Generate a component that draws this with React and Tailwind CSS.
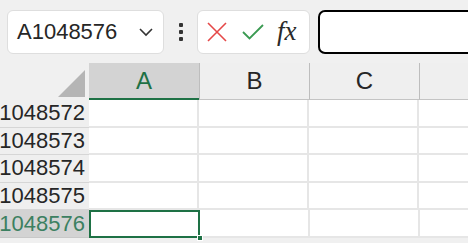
import React from 'react';

const rows = ['1048572', '1048573', '1048574', '1048575', '1048576'];
const cols = ['A', 'B', 'C'];

function Triangle() {
  return (
    <svg width="28" height="28" viewBox="0 0 28 28" className="block">
      <polygon points="0,27 27,27 27,0" fill="#b5b5b5" />
    </svg>
  );
}

export default function App() {
  return (
    <div className="w-[468px] h-[243px] bg-[#f0f0f0] overflow-hidden text-[#262626]" style={{ fontFamily: '"Liberation Sans", Arial, sans-serif' }}>
      {/* Formula bar */}
      <div className="flex items-center h-[63px] pl-[7px] pb-[9px] pt-[9px]">
        <div className="w-[157px] h-[44px] shrink-0 bg-white border border-[#dedede] rounded-[6px] flex items-center justify-between pl-[9px] pr-[9px]">
          <span className="text-[22px] leading-none">A1048576</span>
          <svg width="16" height="10" viewBox="0 0 16 10" fill="none">
            <path d="M2 2 L8 8 L14 2" stroke="#333" strokeWidth="1.6" />
          </svg>
        </div>
        <div className="w-[33px] shrink-0 flex flex-col items-center gap-[3px]">
          <span className="w-[4px] h-[4px] bg-[#333] rounded-[1px]" />
          <span className="w-[4px] h-[4px] bg-[#333] rounded-[1px]" />
          <span className="w-[4px] h-[4px] bg-[#333] rounded-[1px]" />
        </div>
        <div className="w-[113px] h-[44px] shrink-0 bg-white border border-[#dedede] rounded-[6px] flex items-center pl-[9px] gap-[15px]">
          <svg width="20" height="20" viewBox="0 0 20 20" fill="none">
            <path d="M1 1 L19 19 M19 1 L1 19" stroke="#e54848" strokeWidth="1.6" />
          </svg>
          <svg width="22" height="16" viewBox="0 0 22 16" fill="none">
            <path d="M1 8 L7.5 14.5 L21 1" stroke="#3a9a52" strokeWidth="1.8" />
          </svg>
          <span className="text-[27px] italic leading-none text-[#2a2a2a] -ml-[2px]" style={{ fontFamily: '"Liberation Serif", "Times New Roman", serif' }}>fx</span>
        </div>
        <div className="ml-[8px] h-[44px] w-[170px] shrink-0 bg-white border-2 border-black rounded-[7px]" />
      </div>

      {/* Column headers */}
      <div className="flex h-[37px]">
        <div className="w-[89px] shrink-0 flex items-end justify-end pr-[3px] pb-[2px]">
          <Triangle />
        </div>
        {cols.map((c, i) => (
          <div
            key={c}
            className={
              i === 0
                ? 'w-[110px] shrink-0 bg-[#d3d3d3] border-b-2 border-[#1e7145] flex items-center justify-center text-[24px] text-[#1e7145]'
                : 'w-[110px] shrink-0 bg-[#efefef] border-b border-[#c4c4c4] border-l border-l-[#bdbdbd] flex items-center justify-center text-[24px]'
            }
          >
            {c}
          </div>
        ))}
        <div className="flex-1 bg-[#efefef] border-b border-[#c4c4c4] border-l border-l-[#bdbdbd]" />
      </div>

      {/* Grid */}
      <div className="flex flex-col">
        {rows.map((r, i) => {
          const sel = i === rows.length - 1;
          return (
            <div key={r} className="flex h-[27.6px]">
              <div
                className={
                  sel
                    ? 'w-[89px] shrink-0 bg-[#d3d3d3] border-b border-[#c8c8c8] flex items-center justify-end pr-[4px] text-[22px] text-[#3c8061]'
                    : 'w-[89px] shrink-0 bg-[#efefef] border-b border-[#d6d6d6] flex items-center justify-end pr-[4px] text-[22px]'
                }
              >
                <span className="leading-none">{r}</span>
              </div>
              <div
                className={
                  sel
                    ? 'relative w-[111px] shrink-0 bg-white border-2 border-[#1e7145]'
                    : 'w-[110px] shrink-0 bg-white border-b-2 border-r-2 border-[#e6e6e6]'
                }
              >
                {sel && <span className="absolute right-[-5px] bottom-[-5px] w-[6px] h-[6px] bg-[#1e7145] border border-white" />}
              </div>
              <div className="w-[110px] shrink-0 bg-white border-b-2 border-r-2 border-[#e6e6e6]" />
              <div className="w-[110px] shrink-0 bg-white border-b-2 border-r-2 border-[#e6e6e6]" />
              <div className="flex-1 bg-white border-b-2 border-[#e6e6e6]" />
            </div>
          );
        })}
      </div>
    </div>
  );
}
